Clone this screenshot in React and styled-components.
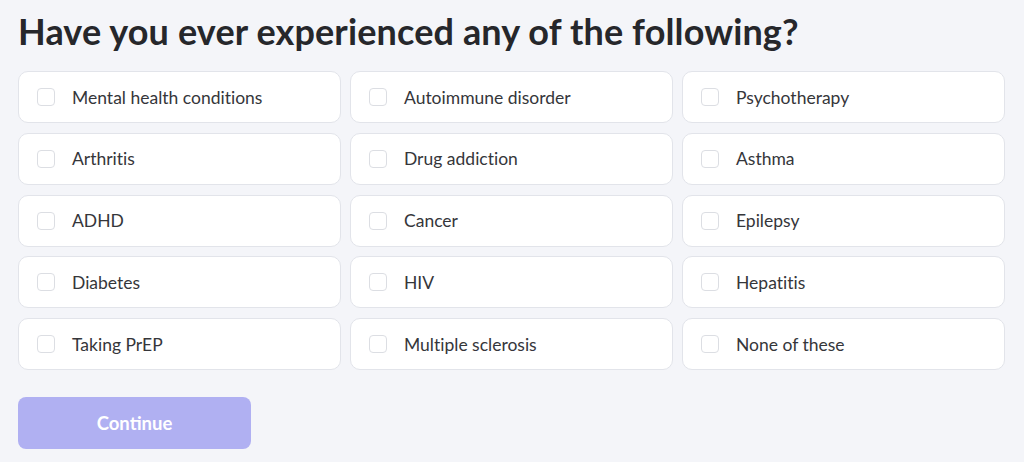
import React from 'react'
import styled, { createGlobalStyle } from 'styled-components'

const GlobalStyle = createGlobalStyle`
  html, body {
    margin: 0;
    padding: 0;
    background: #f4f5f9;
  }
  body {
    font-family: Lato, "Liberation Sans", sans-serif;
    font-variant-ligatures: none;
  }
`

const Page = styled.div`
  padding: 8px 19px 12px 18px;
  box-sizing: border-box;
  width: 1024px;
`

const Title = styled.h1`
  margin: 0 0 17px;
  font-size: 36px;
  line-height: 46px;
  font-weight: 700;
  color: #26272b;
  letter-spacing: 0.13px;
`

const Grid = styled.div`
  display: grid;
  grid-template-columns: repeat(3, 1fr);
  column-gap: 9px;
  row-gap: 9.75px;
`

const Option = styled.label`
  display: flex;
  align-items: center;
  height: 52px;
  box-sizing: border-box;
  padding: 0 18px;
  background: #fff;
  border: 1px solid #e2e4ea;
  border-radius: 10px;
  cursor: pointer;
`

const Box = styled.span`
  width: 18px;
  height: 18px;
  box-sizing: border-box;
  border: 1px solid #dcdee3;
  border-radius: 4px;
  background: ${p => (p.checked ? '#6c6cf0' : '#fff')};
  margin-right: 17px;
  flex-shrink: 0;
`

const Label = styled.span`
  font-size: 17.5px;
  color: #35363a;
`

const Continue = styled.button`
  margin-top: 27px;
  width: 233px;
  height: 52px;
  border: none;
  border-radius: 8px;
  background: #b0b0f2;
  color: #fff;
  font-family: inherit;
  font-size: 18.5px;
  font-weight: 700;
  cursor: ${p => (p.disabled ? 'default' : 'pointer')};
`

const options = [
  'Mental health conditions', 'Autoimmune disorder', 'Psychotherapy',
  'Arthritis', 'Drug addiction', 'Asthma',
  'ADHD', 'Cancer', 'Epilepsy',
  'Diabetes', 'HIV', 'Hepatitis',
  'Taking PrEP', 'Multiple sclerosis', 'None of these',
]

const App = () => {
  const [picked, setPicked] = React.useState([])
  const toggle = name =>
    setPicked(prev => (prev.includes(name) ? prev.filter(n => n !== name) : [...prev, name]))

  return (
    <Page>
      <GlobalStyle />
      <Title>Have you ever experienced any of the following?</Title>
      <Grid>
        {options.map(name => (
          <Option key={name} onClick={() => toggle(name)}>
            <Box checked={picked.includes(name)} />
            <Label>{name}</Label>
          </Option>
        ))}
      </Grid>
      <Continue disabled={picked.length === 0}>Continue</Continue>
    </Page>
  )
}

export default App
